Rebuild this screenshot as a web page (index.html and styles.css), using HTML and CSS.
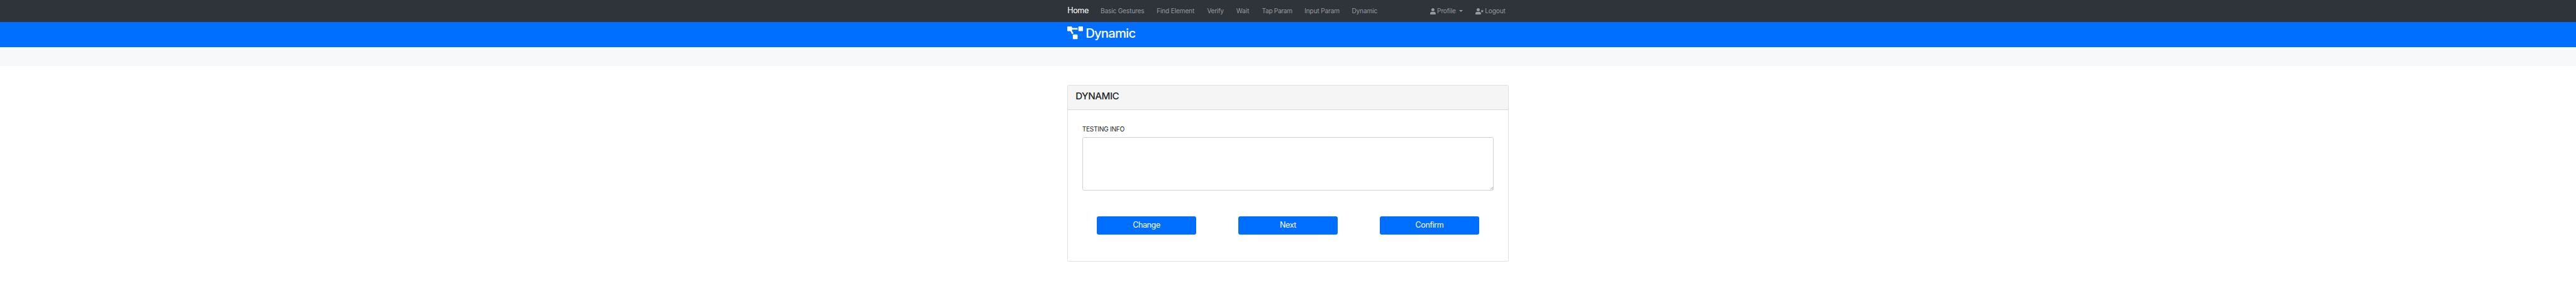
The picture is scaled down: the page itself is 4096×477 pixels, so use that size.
FILE: index.html
```html
<!DOCTYPE html>
<html lang="en">
<head>
<meta charset="utf-8">
<title>Dynamic</title>
<link rel="stylesheet" href="styles.css">
</head>
<body>
<nav class="navbar">
  <div class="container nav-grid">
    <a class="brand">Home</a>
    <a class="link">Basic Gestures</a>
    <a class="link">Find Element</a>
    <a class="link tight">Verify</a>
    <a class="link">Wait</a>
    <a class="link tight">Tap Param</a>
    <a class="link">Input Param</a>
    <a class="link">Dynamic</a>
    <a class="link with-icon">
      <svg class="icon-user" viewBox="0 0 448 512"><path d="M224 256c70.7 0 128-57.3 128-128S294.7 0 224 0 96 57.3 96 128s57.3 128 128 128zm89.6 32h-16.7c-22.2 10.2-46.9 16-72.9 16s-50.6-5.8-72.9-16h-16.7C60.2 288 0 348.2 0 422.4V464c0 26.5 21.5 48 48 48h352c26.5 0 48-21.5 48-48v-41.6c0-74.2-60.2-134.4-134.4-134.4z"/></svg>
      <span>Profile</span>
      <span class="caret"></span>
    </a>
    <a class="link with-icon">
      <svg class="icon-logout" viewBox="0 0 640 512"><path d="M589.6 240l45.6-45.6c6.3-6.3 6.3-16.5 0-22.8l-22.8-22.8c-6.3-6.3-16.5-6.3-22.8 0L544 194.4l-45.6-45.6c-6.3-6.3-16.5-6.3-22.8 0l-22.8 22.8c-6.3 6.3-6.3 16.5 0 22.8l45.6 45.6-45.6 45.6c-6.3 6.3-6.3 16.5 0 22.8l22.8 22.8c6.3 6.3 16.5 6.3 22.8 0l45.6-45.6 45.6 45.6c6.3 6.3 16.5 6.3 22.8 0l22.8-22.8c6.3-6.3 6.3-16.5 0-22.8L589.6 240z"/><path d="M224 256c70.7 0 128-57.3 128-128S294.7 0 224 0 96 57.3 96 128s57.3 128 128 128zm89.6 32h-16.7c-22.2 10.2-46.9 16-72.9 16s-50.6-5.8-72.9-16h-16.7C60.2 288 0 348.2 0 422.4V464c0 26.5 21.5 48 48 48h352c26.5 0 48-21.5 48-48v-41.6c0-74.2-60.2-134.4-134.4-134.4z"/></svg>
      <span>Logout</span>
    </a>
  </div>
</nav>
<header class="page-header">
  <div class="container title-row">
    <svg class="icon-diagram" viewBox="0 0 640 512"><path d="M384 320H256c-17.67 0-32 14.33-32 32v128c0 17.67 14.33 32 32 32h128c17.67 0 32-14.33 32-32V352c0-17.67-14.33-32-32-32zM192 32c0-17.67-14.33-32-32-32H32C14.33 0 0 14.33 0 32v128c0 17.67 14.33 32 32 32h95.72l73.16 128.04C211.98 300.98 232.4 288 256 288h.28L192 175.51V128h224V64H192V32zM608 0H480c-17.67 0-32 14.33-32 32v128c0 17.67 14.33 32 32 32h128c17.67 0 32-14.33 32-32V32c0-17.67-14.33-32-32-32z"/></svg>
    <h1 class="title">Dynamic</h1>
  </div>
</header>
<section class="strip"></section>
<main class="container">
  <div class="card">
    <div class="card-header"><h4 class="card-title">DYNAMIC</h4></div>
    <div class="card-body">
      <label class="label" for="info">TESTING INFO</label>
      <div class="field">
        <textarea class="info" id="info"></textarea>
        <svg class="grip" viewBox="0 0 7 7"><path d="M0.3 6.7 6.7 0.3M4 6.7 6.7 4"/></svg>
      </div>
      <div class="actions">
        <button class="btn">Change</button>
        <button class="btn">Next</button>
        <button class="btn">Confirm</button>
      </div>
    </div>
  </div>
</main>
</body>
</html>
```
FILE: styles.css
```css
:root { --u: 0.6321px; }
* { box-sizing: border-box; }
body {
  margin: 0;
  background: #fff;
  color: #212529;
  font-family: Inter, "Liberation Sans", sans-serif;
  font-size: calc(16 * var(--u));
  line-height: 1.5;
  overflow: hidden;
}
svg { display: block; fill: currentColor; flex: none; }
.container { width: calc(1110 * var(--u)); margin: 0 auto; }

.navbar { height: calc(56 * var(--u)); background: #2f343b; }
.nav-grid {
  display: grid;
  height: 100%;
  align-items: center;
  white-space: nowrap;
  grid-template-columns:
    calc(83.6 * var(--u)) calc(141 * var(--u)) calc(127 * var(--u)) calc(73.4 * var(--u))
    calc(64.5 * var(--u)) calc(107.1 * var(--u)) calc(119 * var(--u)) calc(197.4 * var(--u))
    calc(114 * var(--u)) 1fr;
}
.brand { color: #fff; font-size: calc(20 * var(--u)); letter-spacing: -0.031em; }
.link { color: #97999d; letter-spacing: -0.016em; }
.tight { letter-spacing: -0.031em; }
.with-icon { display: flex; align-items: center; }
.icon-user { width: calc(14 * var(--u)); height: calc(16 * var(--u)); margin-right: calc(3.2 * var(--u)); }
.icon-logout { width: calc(20 * var(--u)); height: calc(16 * var(--u)); margin-right: calc(3.8 * var(--u)); }
.caret {
  margin-left: calc(8 * var(--u));
  margin-bottom: calc(1.5 * var(--u));
  border-top: calc(4.8 * var(--u)) solid;
  border-left: calc(4.8 * var(--u)) solid transparent;
  border-right: calc(4.8 * var(--u)) solid transparent;
  width: 0;
  height: 0;
}

.page-header { height: calc(62 * var(--u)); background: #006eff; color: #fff; }
.title-row { display: flex; padding-top: calc(8 * var(--u)); }
.icon-diagram { width: calc(40 * var(--u)); height: calc(32 * var(--u)); margin: calc(3 * var(--u)) calc(5.8 * var(--u)) 0 0; }
.title { margin: calc(0.8 * var(--u)) 0 0; font-size: calc(32 * var(--u)); font-weight: 500; line-height: 1.2; letter-spacing: -0.038em; }
.strip { height: calc(48 * var(--u)); background: #f6f8fa; }

.card {
  height: calc(444 * var(--u));
  margin-top: calc(48 * var(--u));
  border: 1px solid #dfdfdf;
  border-radius: calc(4 * var(--u));
  overflow: hidden;
}
.card-header {
  height: calc(62 * var(--u));
  padding: calc(12 * var(--u)) calc(19 * var(--u));
  background: #f5f5f5;
  border-bottom: 1px solid #dadada;
}
.card-title { margin: 0; font-size: calc(24 * var(--u)); font-weight: 500; line-height: 1.2; letter-spacing: -0.03em; }
.card-body { padding: calc(36 * var(--u)) calc(35.5 * var(--u)) 0; }
.label { display: block; margin-bottom: calc(8 * var(--u)); letter-spacing: -0.024em; }
.field { position: relative; }
.info {
  display: block;
  width: 100%;
  height: calc(134 * var(--u));
  border: 1px solid #ced4da;
  border-radius: calc(4 * var(--u));
  background: #fff;
  resize: none;
}
.grip {
  position: absolute;
  right: calc(2 * var(--u));
  bottom: calc(2 * var(--u));
  width: calc(7 * var(--u));
  height: calc(7 * var(--u));
  fill: none;
  stroke: #555;
  stroke-width: 0.9;
}
.actions { display: flex; justify-content: space-between; padding: 0 calc(37 * var(--u)); margin-top: calc(64 * var(--u)); }
.btn {
  width: calc(250 * var(--u));
  height: calc(46 * var(--u));
  padding: 0;
  border: 0;
  border-radius: calc(4.8 * var(--u));
  background: #006eff;
  color: #fff;
  font: 400 calc(20 * var(--u))/1.5 Inter, "Liberation Sans", sans-serif;
  letter-spacing: -0.036em;
}
```
